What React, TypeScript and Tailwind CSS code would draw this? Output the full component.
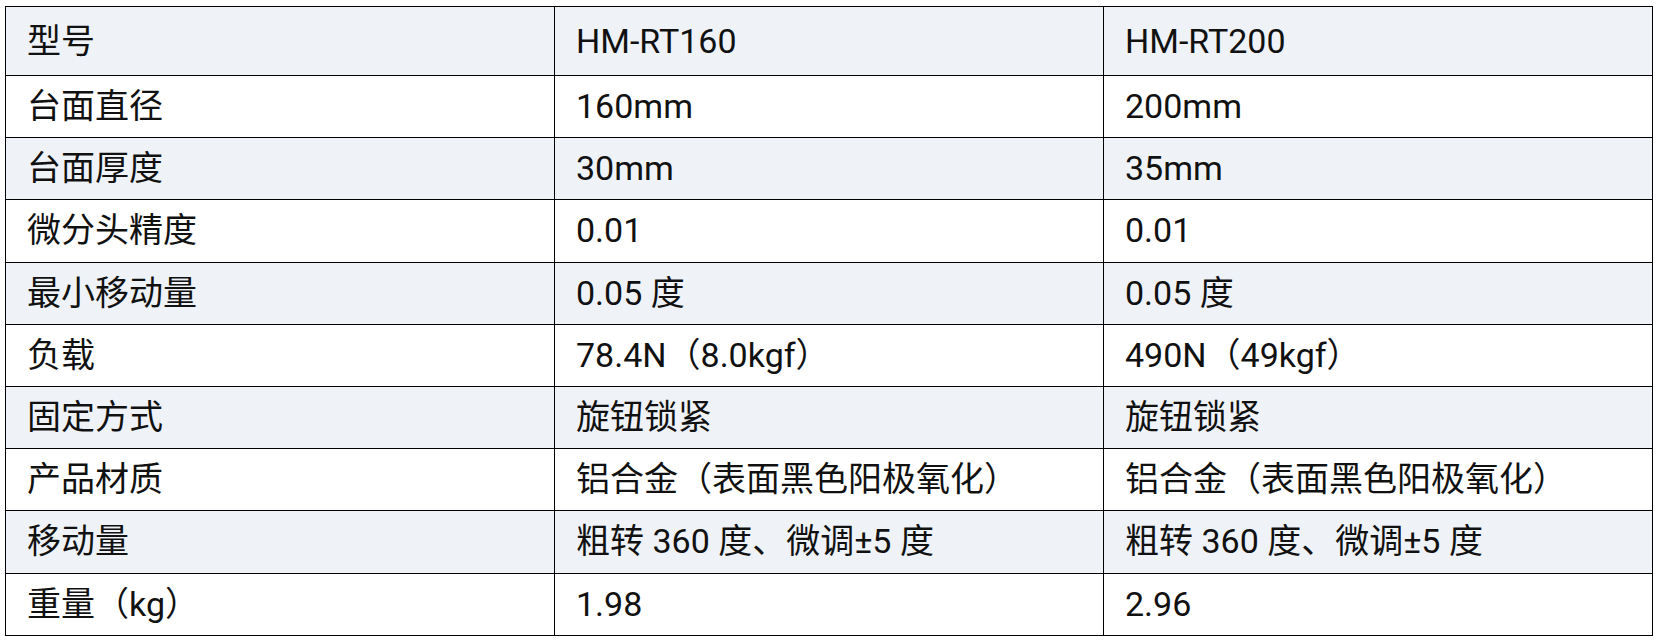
const rows: [string, string, string][] = [
  ['型号', 'HM-RT160', 'HM-RT200'],
  ['台面直径', '160mm', '200mm'],
  ['台面厚度', '30mm', '35mm'],
  ['微分头精度', '0.01', '0.01'],
  ['最小移动量', '0.05 度', '0.05 度'],
  ['负载', '78.4N（8.0kgf）', '490N（49kgf）'],
  ['固定方式', '旋钮锁紧', '旋钮锁紧'],
  ['产品材质', '铝合金（表面黑色阳极氧化）', '铝合金（表面黑色阳极氧化）'],
  ['移动量', '粗转 360 度、微调±5 度', '粗转 360 度、微调±5 度'],
  ['重量（kg）', '1.98', '2.96'],
];

export default function App() {
  return (
    <div className="w-[1658px] h-[640px] bg-white pt-[6px] font-['Roboto','Noto_Sans_CJK_SC',sans-serif] text-[34px] text-[#111]">
      <div className="ml-[5px] w-[1648px] border-t border-l border-r border-black">
        {rows.map((row, i) => (
          <div
            key={i}
            className={
              'grid grid-cols-[549px_549px_548px] border-b border-black ' +
              (i === 0 ? 'h-[69px] ' : 'h-[62.2px] ') +
              (i % 2 === 0 ? 'bg-[#eff3f8]' : 'bg-white')
            }
          >
            {row.map((cell, j) => (
              <div
                key={j}
                className={'flex items-center pl-[21px] whitespace-nowrap ' + (j < 2 ? 'border-r border-black' : '')}
              >
                {cell}
              </div>
            ))}
          </div>
        ))}
      </div>
    </div>
  );
}
